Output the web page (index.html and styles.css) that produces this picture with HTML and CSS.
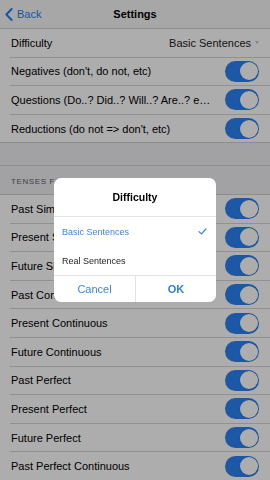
FILE: index.html
```html
<!DOCTYPE html>
<html>
<head>
<meta charset="utf-8">
<link rel="stylesheet" href="styles.css">
</head>
<body>
<div class="nav">
  <div class="nav-left">
    <svg class="chev" width="8" height="13" viewBox="0 0 8 13"><path d="M6.6 1 L1.4 6.5 L6.6 12" fill="none" stroke="#1f7cf0" stroke-width="1.9" stroke-linecap="round" stroke-linejoin="round"/></svg>
    <span class="back">Back</span>
  </div>
  <div class="nav-title">Settings</div>
  <div></div>
</div>

<div class="section">
  <div class="row"><div class="row-in"><span class="label">Difficulty</span><span class="detail">Basic Sentences</span><span class="tri"></span></div></div>
  <div class="row"><div class="row-in"><span class="label">Negatives (don't, do not, etc)</span><span class="switch"><span class="knob"></span></span></div></div>
  <div class="row"><div class="row-in"><span class="label">Questions (Do..? Did..? Will..? Are..? etc...)</span><span class="switch"><span class="knob"></span></span></div></div>
  <div class="row last"><div class="row-in"><span class="label">Reductions (do not =&gt; don't, etc)</span><span class="switch"><span class="knob"></span></span></div></div>
</div>

<div class="spacer"></div>
<div class="header">TENSES FOR PRACTICE</div>

<div class="section">
  <div class="row"><div class="row-in"><span class="label">Past Simple</span><span class="switch"><span class="knob"></span></span></div></div>
  <div class="row"><div class="row-in"><span class="label">Present Simple</span><span class="switch"><span class="knob"></span></span></div></div>
  <div class="row"><div class="row-in"><span class="label">Future Simple</span><span class="switch"><span class="knob"></span></span></div></div>
  <div class="row"><div class="row-in"><span class="label">Past Continuous</span><span class="switch"><span class="knob"></span></span></div></div>
  <div class="row"><div class="row-in"><span class="label">Present Continuous</span><span class="switch"><span class="knob"></span></span></div></div>
  <div class="row"><div class="row-in"><span class="label">Future Continuous</span><span class="switch"><span class="knob"></span></span></div></div>
  <div class="row"><div class="row-in"><span class="label">Past Perfect</span><span class="switch"><span class="knob"></span></span></div></div>
  <div class="row"><div class="row-in"><span class="label">Present Perfect</span><span class="switch"><span class="knob"></span></span></div></div>
  <div class="row"><div class="row-in"><span class="label">Future Perfect</span><span class="switch"><span class="knob"></span></span></div></div>
  <div class="row"><div class="row-in"><span class="label">Past Perfect Continuous</span><span class="switch"><span class="knob"></span></span></div></div>
</div>

<div class="overlay">
  <div class="dialog">
    <div class="d-title">Difficulty</div>
    <div class="d-list">
      <div class="d-item sel"><span>Basic Sentences</span>
        <svg class="check" width="9" height="7" viewBox="0 0 9 7"><path d="M1 3.6 L3.4 5.9 L8 1" fill="none" stroke="#3d87d8" stroke-width="1.3" stroke-linecap="round" stroke-linejoin="round"/></svg>
      </div>
      <div class="d-item"><span>Real Sentences</span></div>
    </div>
    <div class="d-buttons">
      <div class="d-btn">Cancel</div>
      <div class="d-btn ok">OK</div>
    </div>
  </div>
</div>
</body>
</html>
```

FILE: styles.css
```css
* { box-sizing: border-box; }
html, body { margin: 0; padding: 0; }
body {
  width: 270px;
  height: 480px;
  overflow: hidden;
  background: #efeff4;
  font-family: "Liberation Sans", Arial, sans-serif;
  color: #000;
}
.nav {
  height: 29px;
  background: #f7f7f8;
  border-bottom: 1px solid #cfcfd3;
  display: grid;
  grid-template-columns: 1fr auto 1fr;
  align-items: center;
}
.nav-left {
  display: flex;
  align-items: center;
  padding-left: 5px;
  gap: 4px;
}
.chev { display: block; }
.back { font-size: 11px; color: #1f7cf0; }
.nav-title { font-size: 11px; font-weight: bold; }

.section { background: #fff; }
.row { padding-left: 10px; height: 28.6px; }
.row-in {
  height: 100%;
  border-bottom: 1px solid #d6d6da;
  display: flex;
  align-items: center;
  padding-right: 11px;
}
.row.last { border-bottom: 1px solid #d0d0d4; }
.row.last .row-in { border-bottom: none; }
.label {
  flex: 1;
  min-width: 0;
  font-size: 11px;
  white-space: nowrap;
  overflow: hidden;
  text-overflow: ellipsis;
  padding-left: 1px;
}
.detail { font-size: 11px; color: #222; }
.tri {
  margin-left: 4px;
  width: 0; height: 0;
  border-left: 2.5px solid transparent;
  border-right: 2.5px solid transparent;
  border-top: 3px solid #c4c4c8;
}
.switch {
  flex: none;
  margin-left: 13px;
  width: 34px;
  height: 21px;
  border-radius: 10.5px;
  background: #2a82f4;
  display: flex;
  justify-content: flex-end;
  align-items: center;
  padding: 1.5px;
}
.knob {
  width: 18px;
  height: 18px;
  border-radius: 50%;
  background: #fff;
  box-shadow: 0 0 0 0.5px rgba(0,0,0,0.15);
}
.spacer {
  height: 22.3px;
  border-bottom: 1px solid #d0d0d4;
}
.header {
  height: 29.3px;
  border-bottom: 1px solid #d0d0d4;
  padding: 11px 0 0 11px;
  font-size: 8px;
  letter-spacing: 0.6px;
  color: #5e5e63;
  line-height: 10px;
}

.overlay {
  position: fixed;
  inset: 0;
  background: rgba(0,0,0,0.32);
  display: flex;
  align-items: center;
  justify-content: center;
}
.dialog {
  width: 162px;
  height: 124px;
  background: #fff;
  border-radius: 7px;
  overflow: hidden;
  display: flex;
  flex-direction: column;
}
.d-title {
  height: 39px;
  border-bottom: 1px solid #e3e3e6;
  display: flex;
  align-items: center;
  justify-content: center;
  font-size: 10.5px;
  font-weight: bold;
  padding-bottom: 1px;
}
.d-item {
  height: 29px;
  display: flex;
  align-items: center;
  justify-content: space-between;
  padding: 0 9px 0 8px;
  font-size: 9px;
  color: #1e1e1e;
}
.d-item.sel { color: #3d87d8; padding-top: 1px; }
.check { display: block; margin-top: -2px; }
.d-buttons {
  flex: 1;
  border-top: 1px solid #e3e3e6;
  display: grid;
  grid-template-columns: 1fr 1fr;
}
.d-btn {
  display: flex;
  align-items: center;
  justify-content: center;
  font-size: 11px;
  color: #3d87d8;
}
.d-btn + .d-btn { border-left: 1px solid #e3e3e6; }
.d-btn.ok { font-weight: bold; color: #2f7fd4; }
```
